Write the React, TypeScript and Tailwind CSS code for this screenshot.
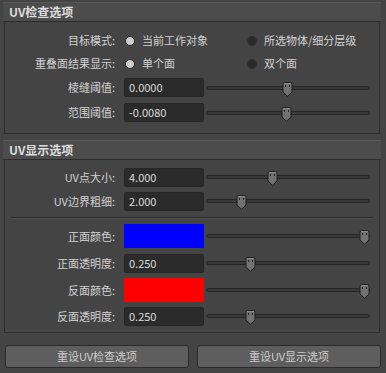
import React from "react";

const font = { fontFamily: '"Noto Sans CJK SC", "DejaVu Sans", sans-serif' };

function Thumb({ x }: { x: number }) {
  // x = thumb centre, measured from the track's inner left edge
  return (
    <svg
      width="11"
      height="15"
      viewBox="0 0 11 15"
      className="absolute top-1/2 -translate-y-[6px]"
      style={{ left: x - 5.5 }}
    >
      <path
        d="M1 2 Q1 0.5 2.5 0.5 H8.5 Q10 0.5 10 2 V10 L5.5 14.3 L1 10 Z"
        fill="#727272"
        stroke="#1f1f1f"
      />
      <path d="M2 1.5 H9" stroke="#8c8c8c" />
      <rect x="3" y="3" width="1" height="2" fill="#222" />
      <rect x="7" y="3" width="1" height="2" fill="#222" />
    </svg>
  );
}

function Slider({ at }: { at: number }) {
  return (
    <div className="relative ml-[2px] h-[4px] w-[164px] rounded-full border border-[#262626] bg-[#393939]">
      <Thumb x={at - 207} />
    </div>
  );
}

function Label({ children }: { children: React.ReactNode }) {
  return (
    <div className="w-[111px] shrink-0 pr-[1px] text-right text-[11px] text-[#d2d2d2]">
      {children}
    </div>
  );
}

function NumRow({ label, value, at, h = "h-[25px]" }: { label: string; value: string; at: number; h?: string }) {
  return (
    <div className={`flex items-center ${h}`}>
      <Label>{label}</Label>
      <div className="ml-[8px] flex h-[19px] w-[80px] items-center rounded-[2px] border border-[#262626] bg-[#2b2b2b] pl-[4px] text-[11px] text-[#dcdcdc]">
        {value}
      </div>
      <Slider at={at} />
    </div>
  );
}

function ColorRow({ label, color, h }: { label: string; color: string; h: string }) {
  return (
    <div className={`flex items-center ${h}`}>
      <Label>{label}</Label>
      <div className={`ml-[8px] h-[24px] w-[80px] ${color}`} />
      <Slider at={364} />
    </div>
  );
}

function Radio({ on, text, w }: { on: boolean; text: string; w?: string }) {
  return (
    <div className={`flex items-center ${w ?? ""}`}>
      <span
        className={`ml-[1px] h-[10px] w-[10px] rounded-full border ${
          on ? "border-[#2a2a2a] bg-[#cfcfcf]" : "border-[#2e2e2e] bg-[#2a2a2a]"
        }`}
      />
      <span className="ml-[7px] text-[11px] text-[#d2d2d2]">{text}</span>
    </div>
  );
}

function Header({ title }: { title: string }) {
  return (
    <div className="flex h-[20px] items-center border-t border-t-[#575757] border-b border-b-[#2c2c2c] bg-[#4c4c4c] pl-[6px] text-[12px] font-bold text-[#dedede]">
      {title}
    </div>
  );
}

export default function App() {
  return (
    <div className="h-[373px] w-[386px] bg-[#444444] pt-[2px]" style={font}>
      <div className="ml-[3px] w-[378px]">
        <Header title="UV检查选项" />
        <div className="mx-[1px] border border-t-0 border-[#2f2f2f] pb-[8px] pt-[7px]">
          <div className="flex h-[23px] items-center">
            <Label>目标模式:</Label>
            <div className="ml-[8px] flex">
              <Radio on text="当前工作对象" w="w-[122px]" />
              <Radio on={false} text="所选物体/细分层级" />
            </div>
          </div>
          <div className="flex h-[23px] items-center">
            <Label>重叠面结果显示:</Label>
            <div className="ml-[8px] flex">
              <Radio on text="单个面" w="w-[122px]" />
              <Radio on={false} text="双个面" />
            </div>
          </div>
          <NumRow label="棱缝阈值:" value="0.0000" at={287} />
          <NumRow label="范围阈值:" value="-0.0080" at={286} />
        </div>

        <div className="mt-[6px]">
          <Header title="UV显示选项" />
        </div>
        <div className="mx-[1px] border border-t-0 border-[#2f2f2f] pb-[4px] pt-[5px]">
          <NumRow label="UV点大小:" value="4.000" at={272} h="h-[24px]" />
          <NumRow label="UV边界粗细:" value="2.000" at={241} h="h-[24px]" />
          <div className="mx-[6px] mb-[3px] mt-[4px] h-[2px] border-t border-t-[#2e2e2e] border-b border-b-[#4e4e4e]" />
          <ColorRow label="正面颜色:" color="bg-[#0000ff]" h="h-[28px]" />
          <NumRow label="正面透明度:" value="0.250" at={250} h="h-[26px]" />
          <ColorRow label="反面颜色:" color="bg-[#ff0000]" h="h-[28px]" />
          <NumRow label="反面透明度:" value="0.250" at={250} h="h-[24px]" />
        </div>
      </div>

      <div className="ml-[5px] mt-[12px] flex w-[376px] gap-[8px]">
        <button className="h-[23px] flex-1 rounded-[3px] border border-[#2a2a2a] bg-[#5e5e5e] text-[11px] text-[#cfcfcf]">
          重设UV检查选项
        </button>
        <button className="h-[23px] flex-1 rounded-[3px] border border-[#2a2a2a] bg-[#5e5e5e] text-[11px] text-[#cfcfcf]">
          重设UV显示选项
        </button>
      </div>
    </div>
  );
}
